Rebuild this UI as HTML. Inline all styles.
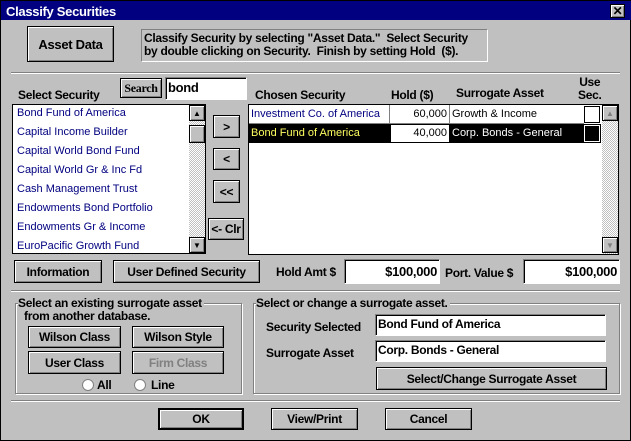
<!DOCTYPE html>
<html><head><meta charset="utf-8"><style>
*{box-sizing:border-box;margin:0;padding:0}
body{width:631px;height:441px;background:#c0c0c0;font-family:"Liberation Sans",Arial,sans-serif;position:relative;overflow:hidden;border:1px solid #000}
.a{position:absolute}
.b{position:absolute;background:#c0c0c0;border:1px solid #000;box-shadow:inset 1px 1px 0 #fff,inset -1px -1px 0 #808080;font-weight:bold;font-size:12px;display:flex;align-items:center;justify-content:center;letter-spacing:-0.3px;white-space:nowrap}
.s{position:absolute;background:#fff;border:1px solid #808080;border-right-color:#fff;border-bottom-color:#fff;box-shadow:inset 1px 1px 0 #000}
.l{position:absolute;font-weight:bold;font-size:12px;letter-spacing:-0.3px;white-space:nowrap}
.it{position:absolute;left:4px;font-size:11px;color:#000080;white-space:nowrap}
.sep{position:absolute;left:10px;right:10px;height:2px;border-top:1px solid #808080;border-bottom:1px solid #fff}
.grp{position:absolute;border:1px solid #808080;box-shadow:1px 1px 0 #fff,inset 1px 1px 0 #fff}
.cell{position:absolute;font-size:11px;white-space:nowrap;padding:3px 2px;height:19px}
.hatch{background:repeating-conic-gradient(#c0c0c0 0 25%,#fff 0 50%) 0 0/2px 2px}
.sb{position:absolute;width:16px;height:16px;background:#c0c0c0;border:1px solid #000;box-shadow:inset 1px 1px 0 #fff,inset -1px -1px 0 #808080;font-size:8px;display:flex;align-items:center;justify-content:center}
</style></head><body>
<div class="a" style="left:0;top:0;width:631px;height:19px;background:#000080"></div>
<div class="l" style="left:5px;top:3px;color:#fff;font-size:13px">Classify Securities</div>
<div class="b" style="left:609px;top:3px;width:15px;height:14px;font-size:12px">✕</div>

<div class="b" style="left:26px;top:25px;width:87px;height:36px;font-size:13px">Asset Data</div>
<div class="a" style="left:140px;top:28px;width:347px;height:33px;border:1px solid #808080;border-right-color:#fff;border-bottom-color:#fff"></div>
<div class="l" style="left:143px;top:31px;line-height:13px">Classify Security by selecting "Asset Data."&nbsp; Select Security<br>by double clicking on Security.&nbsp; Finish by setting Hold&nbsp; ($).</div>
<div class="sep" style="top:71px"></div>

<div class="l" style="left:17px;top:87px">Select Security</div>
<div class="b" style="left:119px;top:77px;width:42px;height:20px;font-family:'Liberation Serif',serif;font-size:12px">Search</div>
<div class="s" style="left:164px;top:76px;width:82px;height:23px"></div>
<div class="l" style="left:167px;top:79px;font-size:13px">bond</div>

<div class="a" style="left:11px;top:103px;width:194px;height:150px;background:#fff;border:1px solid #000"></div>
<div class="a" style="left:12px;top:104px">
<div class="it" style="top:2px">Bond Fund of America</div>
<div class="it" style="top:21px">Capital Income Builder</div>
<div class="it" style="top:40px">Capital World Bond Fund</div>
<div class="it" style="top:59px">Capital World Gr &amp; Inc Fd</div>
<div class="it" style="top:78px">Cash Management Trust</div>
<div class="it" style="top:97px">Endowments Bond Portfolio</div>
<div class="it" style="top:116px">Endowments Gr &amp; Income</div>
<div class="it" style="top:135px">EuroPacific Growth Fund</div>
</div>
<div class="a hatch" style="left:188px;top:104px;width:16px;height:148px"></div>
<div class="sb" style="left:188px;top:104px">▲</div>
<div class="sb" style="left:188px;top:124px;height:18px"></div>
<div class="sb" style="left:188px;top:236px">▼</div>

<div class="b" style="left:212px;top:114px;width:27px;height:23px">&gt;</div>
<div class="b" style="left:212px;top:147px;width:27px;height:22px">&lt;</div>
<div class="b" style="left:212px;top:179px;width:27px;height:23px">&lt;&lt;</div>
<div class="b" style="left:207px;top:217px;width:36px;height:22px">&lt;- Clr</div>

<div class="l" style="left:254px;top:87px">Chosen Security</div>
<div class="l" style="left:390px;top:87px">Hold ($)</div>
<div class="l" style="left:455px;top:85px">Surrogate Asset</div>
<div class="l" style="left:577px;top:75px;line-height:13px;text-align:center">Use<br>Sec.</div>

<div class="a" style="left:247px;top:103px;width:371px;height:151px;background:#fff;border:1px solid #000"></div>
<div class="cell" style="left:248px;top:104px;width:141px;color:#000080;border-right:1px solid #808080;border-bottom:1px solid #808080">Investment Co. of America</div>
<div class="cell" style="left:389px;top:104px;width:60px;text-align:right;border-right:1px solid #808080;border-bottom:1px solid #808080">60,000</div>
<div class="cell" style="left:449px;top:104px;width:134px;border-bottom:1px solid #808080">Growth &amp; Income</div>
<div class="a" style="left:583px;top:105px;width:16px;height:17px;border:1px solid #000;background:#fff"></div>
<div class="a" style="left:248px;top:123px;width:352px;height:19px;background:#000"></div>
<div class="cell" style="left:248px;top:123px;width:141px;color:#ffff60">Bond Fund of America</div>
<div class="cell" style="left:390px;top:124px;width:58px;height:17px;padding-top:2px;text-align:right;background:#fff">40,000</div>
<div class="cell" style="left:449px;top:123px;width:134px;color:#fff">Corp. Bonds - General</div>
<div class="a" style="left:583px;top:124px;width:16px;height:17px;border:1px solid #fff;background:#000"></div>
<div class="a hatch" style="left:601px;top:104px;width:16px;height:149px"></div>
<div class="sb" style="left:601px;top:104px;color:#808080">▲</div>
<div class="sb" style="left:601px;top:236px;color:#808080">▼</div>

<div class="b" style="left:13px;top:259px;width:88px;height:23px">Information</div>
<div class="b" style="left:112px;top:259px;width:147px;height:23px">User Defined Security</div>
<div class="l" style="left:275px;top:264px">Hold Amt $</div>
<div class="s" style="left:343px;top:258px;width:96px;height:25px"></div>
<div class="l" style="left:343px;top:263px;width:93px;text-align:right;font-size:13px">$100,000</div>
<div class="l" style="left:444px;top:265px">Port. Value $</div>
<div class="s" style="left:522px;top:258px;width:97px;height:25px"></div>
<div class="l" style="left:522px;top:263px;width:94px;text-align:right;font-size:13px">$100,000</div>
<div class="sep" style="top:289px"></div>

<div class="grp" style="left:14px;top:302px;width:227px;height:91px"></div>
<div class="l" style="left:17px;top:295px;background:#c0c0c0;padding-right:2px;font-weight:bold">Select an existing surrogate asset</div>
<div class="l" style="left:23px;top:308px">from another database.</div>
<div class="b" style="left:27px;top:325px;width:93px;height:22px">Wilson Class</div>
<div class="b" style="left:131px;top:325px;width:92px;height:22px">Wilson Style</div>
<div class="b" style="left:27px;top:350px;width:93px;height:23px">User Class</div>
<div class="b" style="left:131px;top:350px;width:92px;height:23px;color:#808080">Firm Class</div>
<div class="a" style="left:81px;top:378px;width:12px;height:12px;border-radius:50%;background:#fff;border:1px solid #808080"></div>
<div class="l" style="left:96px;top:377px">All</div>
<div class="a" style="left:133px;top:378px;width:12px;height:12px;border-radius:50%;background:#fff;border:1px solid #808080"></div>
<div class="l" style="left:150px;top:377px">Line</div>

<div class="grp" style="left:252px;top:302px;width:367px;height:91px"></div>
<div class="l" style="left:255px;top:295px;background:#c0c0c0;padding-right:2px">Select or change a surrogate asset.</div>
<div class="l" style="left:265px;top:319px">Security Selected</div>
<div class="s" style="left:374px;top:313px;width:231px;height:22px"></div>
<div class="l" style="left:377px;top:316px">Bond Fund of America</div>
<div class="l" style="left:265px;top:345px">Surrogate Asset</div>
<div class="s" style="left:374px;top:339px;width:231px;height:22px"></div>
<div class="l" style="left:377px;top:342px">Corp. Bonds - General</div>
<div class="b" style="left:375px;top:366px;width:231px;height:23px">Select/Change Surrogate Asset</div>
<div class="sep" style="top:399px"></div>

<div class="b" style="left:157px;top:407px;width:86px;height:22px;border-width:2px">OK</div>
<div class="b" style="left:270px;top:407px;width:87px;height:22px">View/Print</div>
<div class="b" style="left:384px;top:407px;width:87px;height:22px">Cancel</div>
</body></html>
